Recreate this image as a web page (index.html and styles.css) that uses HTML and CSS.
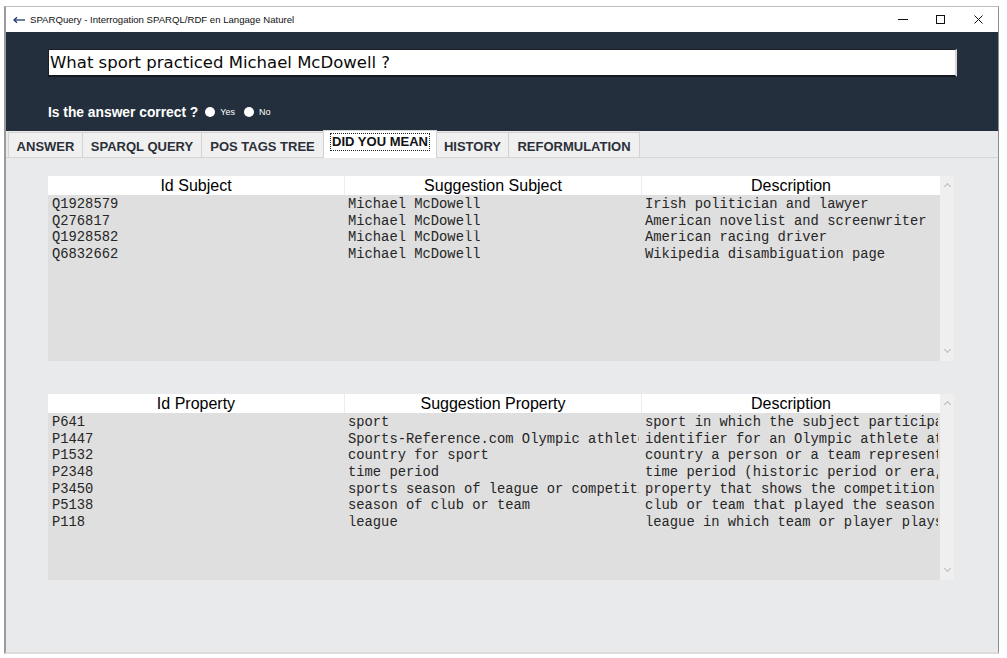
FILE: index.html
```html
<!DOCTYPE html>
<html>
<head>
<meta charset="utf-8">
<title>SPARQuery</title>
<link rel="stylesheet" href="styles.css">
</head>
<body>
<div class="window">
  <div class="titlebar">
    <svg class="app-icon" width="12" height="8" viewBox="0 0 12 8"><path d="M1 4 H12" stroke="#1d3a6b" stroke-width="1.3"/><path d="M4 1.2 L1 4 L4 6.8" fill="none" stroke="#1d3a6b" stroke-width="1.3"/></svg>
    <span class="title">SPARQuery - Interrogation SPARQL/RDF en Langage Naturel</span>
    <div class="controls">
      <svg width="38" height="25" viewBox="0 0 38 25"><path d="M14 12.5 H24" stroke="#111" stroke-width="1"/></svg>
      <svg width="38" height="25" viewBox="0 0 38 25"><rect x="14.5" y="8.5" width="8" height="8" fill="none" stroke="#111" stroke-width="1"/></svg>
      <svg width="38" height="25" viewBox="0 0 38 25"><path d="M14.5 8.5 L22.5 16.5 M22.5 8.5 L14.5 16.5" stroke="#111" stroke-width="1"/></svg>
    </div>
  </div>
  <div class="header">
    <div class="query">What sport practiced Michael McDowell ?</div>
    <div class="feedback">
      <span class="ask">Is the answer correct ?</span>
      <span class="radio"></span><span class="opt">Yes</span>
      <span class="radio"></span><span class="opt">No</span>
    </div>
  </div>
  <div class="tabs">
    <div class="tab w1">ANSWER</div>
    <div class="tab w2">SPARQL QUERY</div>
    <div class="tab w3">POS TAGS TREE</div>
    <div class="tab w4 active"><span class="focus">DID YOU MEAN</span></div>
    <div class="tab w5">HISTORY</div>
    <div class="tab w6">REFORMULATION</div>
  </div>
  <div class="content">
    <div class="table">
      <div class="grid">
        <div class="row head"><div>Id Subject</div><div>Suggestion Subject</div><div>Description</div></div>
        <div class="body">
          <div class="row"><div>Q1928579</div><div>Michael McDowell</div><div>Irish politician and lawyer</div></div>
          <div class="row"><div>Q276817</div><div>Michael McDowell</div><div>American novelist and screenwriter</div></div>
          <div class="row"><div>Q1928582</div><div>Michael McDowell</div><div>American racing driver</div></div>
          <div class="row"><div>Q6832662</div><div>Michael McDowell</div><div>Wikipedia disambiguation page</div></div>
        </div>
      </div>
      <div class="scroll"><span class="up"></span><span class="down"></span></div>
    </div>
    <div class="table second">
      <div class="grid">
        <div class="row head"><div>Id Property</div><div>Suggestion Property</div><div>Description</div></div>
        <div class="body">
          <div class="row"><div>P641</div><div>sport</div><div>sport in which the subject participates or belongs to</div></div>
          <div class="row"><div>P1447</div><div>Sports-Reference.com Olympic athlete ID</div><div>identifier for an Olympic athlete at Sports-Reference.com</div></div>
          <div class="row"><div>P1532</div><div>country for sport</div><div>country a person or a team represents when playing a sport</div></div>
          <div class="row"><div>P2348</div><div>time period</div><div>time period (historic period or era, sports season, theatre season)</div></div>
          <div class="row"><div>P3450</div><div>sports season of league or competition</div><div>property that shows the competition of which the item is a season</div></div>
          <div class="row"><div>P5138</div><div>season of club or team</div><div>club or team that played the season</div></div>
          <div class="row"><div>P118</div><div>league</div><div>league in which team or player plays or has played in</div></div>
        </div>
      </div>
      <div class="scroll"><span class="up"></span><span class="down"></span></div>
    </div>
  </div>
</div>
</body>
</html>
```
FILE: styles.css
```css
html, body {
  margin: 0;
  padding: 0;
  background: #ffffff;
}
.window {
  margin: 6px 0 0 4px;
  width: 995px;
  height: 648px;
  box-sizing: border-box;
  border-top: 1px solid #bdbdbd;
  border-left: 2px solid #9c9c9c;
  border-right: 1px solid #8e8e8e;
  border-bottom: 2px solid #dcdcdc;
  display: flex;
  flex-direction: column;
  background: #e9eaec;
}
.titlebar {
  height: 25px;
  flex: none;
  background: #ffffff;
  display: flex;
  align-items: center;
  font-family: "Liberation Sans", Arial, sans-serif;
  font-size: 9.6px;
  color: #111;
}
.app-icon {
  margin-left: 7px;
  margin-right: 5px;
}
.title {
  flex: 1;
}
.controls {
  display: flex;
}
.controls svg {
  display: block;
}
.header {
  height: 99px;
  flex: none;
  background: #232f3d;
  padding: 17px 41px 0 42px;
  box-sizing: border-box;
}
.query {
  height: 28px;
  box-sizing: border-box;
  background: #ffffff;
  border-top: 1px solid #1a1f26;
  border-left: 1px solid #1a1f26;
  border-bottom: 2px solid #15191f;
  border-right: 2px solid #d8d8d8;
  font-family: "DejaVu Sans", Verdana, sans-serif;
  font-size: 16.5px;
  line-height: 26px;
  padding-left: 1px;
  color: #0a0a0a;
  white-space: nowrap;
}
.feedback {
  margin-top: 27px;
  display: flex;
  align-items: center;
  color: #ffffff;
  font-family: "Liberation Sans", Arial, sans-serif;
  height: 16px;
}
.ask {
  font-weight: bold;
  font-size: 13.8px;
  margin-right: 7px;
}
.radio {
  width: 10px;
  height: 10px;
  border-radius: 50%;
  background: #ffffff;
  margin-right: 5px;
}
.opt {
  font-size: 9px;
  margin-right: 9px;
}
.tabs {
  height: 27px;
  flex: none;
  box-sizing: border-box;
  border-bottom: 1px solid #d6d6d6;
  padding: 2px 0 0 2px;
  display: flex;
  align-items: flex-end;
}
.tab {
  height: 25px;
  box-sizing: border-box;
  background: #f0f0f0;
  border: 1px solid #d3d3d3;
  border-bottom: none;
  margin-right: -1px;
  font-family: "Liberation Sans", Arial, sans-serif;
  font-weight: bold;
  font-size: 13px;
  color: #2b2f38;
  display: flex;
  align-items: center;
  justify-content: center;
  padding-top: 3px;
}
.w1 { width: 75px; }
.w2 { width: 120px; }
.w3 { width: 123px; }
.w4 { width: 114px; }
.w5 { width: 73px; }
.w6 { width: 132px; }
.tab.active {
  height: 28px;
  margin-bottom: -1px;
  background: #ffffff;
  color: #111;
  position: relative;
  padding-top: 0;
  padding-bottom: 5px;
  z-index: 1;
}
.focus {
  outline: 1px dotted #222;
  padding: 0 1px;
  line-height: 16px;
}
.content {
  flex: 1;
  padding: 18px 0 0 42px;
}
.table {
  display: flex;
  width: 906px;
  height: 185px;
}
.table.second {
  margin-top: 33px;
  height: 186px;
}
.grid {
  width: 892px;
  background: #dfdfdf;
}
.body {
  padding-top: 2px;
}
.row {
  display: grid;
  grid-template-columns: 296px 297px 299px;
  height: 16.7px;
  font-family: "Liberation Mono", "Courier New", monospace;
  font-size: 13.8px;
  line-height: 16.7px;
  color: #262626;
}
.row > div {
  white-space: nowrap;
  overflow: hidden;
  padding-left: 4px;
}
.row > div:nth-child(2) {
  clip-path: inset(0 2px 0 0);
}
.row > div:nth-child(3) {
  clip-path: inset(0 2px 0 0);
}
.row.head {
  height: 19px;
  background: #ffffff;
  font-family: "Liberation Sans", Arial, sans-serif;
  font-size: 16px;
  line-height: 20px;
  color: #000;
}
.row.head > div {
  text-align: center;
  padding-left: 0;
  padding-right: 0;
  clip-path: none;
}
.row.head > div + div {
  border-left: 1px solid #ececec;
}
.scroll {
  width: 14px;
  background: #efefef;
  display: flex;
  flex-direction: column;
  justify-content: space-between;
  align-items: center;
  padding: 6px 0 7px;
  box-sizing: border-box;
}
.up, .down {
  width: 4px;
  height: 4px;
  border-left: 1px solid #b9b9b9;
  border-top: 1px solid #b9b9b9;
}
.up {
  transform: rotate(45deg);
  margin-top: 2px;
}
.down {
  transform: rotate(225deg);
  margin-bottom: 2px;
}
```
